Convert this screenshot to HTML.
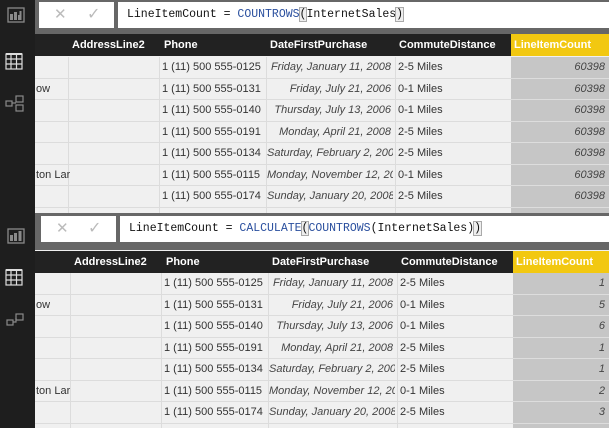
<!DOCTYPE html><html><head><style>
*{margin:0;padding:0;box-sizing:border-box}
body{width:609px;height:428px;overflow:hidden;background:#1e1e1e;position:relative;font-family:"Liberation Sans",sans-serif;font-size:11px;color:#333}
.p{position:absolute;left:35px;width:574px;overflow:hidden}
.fb{position:absolute;left:0;top:0;width:100%;background:#676767}
.bx{position:absolute;background:#fff}
.f{font-family:"Liberation Mono",monospace;font-size:11.5px;color:#111;position:absolute;white-space:nowrap}
.f b{font-weight:normal;color:#2a4f9e}
.f i{font-style:normal;outline:1px solid #aaa;background:#eee}
.hd{position:absolute;left:0;width:100%;height:22px;background:#222;color:#fff;font-weight:bold}
.hd span{position:absolute;top:5px}
.y{position:absolute;top:0;height:22px;background:#f2c811;right:0}
.r{position:absolute;left:0;width:100%;height:21.5px;background:#f0f0f0;border-bottom:1px solid #dcdcdc}
.r span{position:absolute;top:4px;white-space:nowrap;overflow:hidden}
.r .c{position:absolute;top:0;bottom:0;border-left:1px solid #dcdcdc}
.r .g{position:absolute;top:0;bottom:-1px;right:0;background:#c6c6c6;border-bottom:1px solid #ddd}
.it{font-style:italic;color:#444;text-align:right}
.ic{position:absolute;left:0;width:35px}
</style></head><body>
<!-- sidebar icons -->
<svg class="ic" style="top:0;height:428px" width="35" height="428">
<g fill="none" stroke="#8a8a8a" stroke-width="1.3">
<rect x="8" y="28" width="16" height="14" transform="translate(0,-20)"/>
<rect x="8" y="229" width="16" height="14"/>
</g>
<g fill="#8a8a8a"><rect x="10" y="14" width="3" height="6"/><rect x="14" y="12" width="3" height="8"/><rect x="18" y="15" width="3" height="5"/><rect x="19.5" y="11" width="2" height="9"/>
<rect x="10" y="235" width="3" height="6"/><rect x="14" y="233" width="3" height="8"/><rect x="18.5" y="231" width="3" height="10"/></g>
<g fill="none" stroke="#ddd" stroke-width="1.2">
<rect x="6" y="54" width="16" height="15"/><path d="M6 59h16M6 64h16M11 54v15M16.5 54v15"/>
<rect x="6" y="270" width="16" height="15"/><path d="M6 275h16M6 280h16M11 270v15M16.5 270v15"/>
</g>
<rect x="6" y="53" width="16" height="2" fill="#ddd"/><rect x="6" y="269" width="16" height="2" fill="#ddd"/>
<g fill="none" stroke="#8a8a8a" stroke-width="1.2">
<rect x="6" y="101" width="6" height="5"/><rect x="16" y="96" width="7" height="6"/><rect x="16" y="105" width="7" height="6"/><path d="M12 103h4"/>
<rect x="7" y="320" width="6" height="5"/><rect x="16" y="314" width="7" height="6"/><path d="M13 322h3v-4"/>
</g>
</svg>

<!-- panel 1 -->
<div class="p" style="top:0;height:213px;background:#f0f0f0">
<div class="fb" style="height:34px"></div>
<div class="bx" style="left:4px;top:2px;width:75px;height:26px"><span style="position:absolute;left:15px;top:3px;color:#bbb;font-size:15px">✕</span><span style="position:absolute;left:48px;top:2px;color:#bbb;font-size:16px">✓</span></div>
<div class="bx" style="left:83px;top:2px;width:491px;height:26px"><div class="f" style="left:9px;top:6px">LineItemCount = <b>COUNTROWS</b><i>(</i>InternetSales<i>)</i></div></div>
<div class="hd" style="top:34px"><span style="left:37px">AddressLine2</span><span style="left:129px">Phone</span><span style="left:235px">DateFirstPurchase</span><span style="left:364px">CommuteDistance</span><div class="y" style="width:98px"><span style="left:3px;color:#fff">LineItemCount</span></div></div>
</div>
<!-- panel 2 -->
<div class="p" style="top:213px;height:215px;background:#f0f0f0">
<div class="fb" style="height:37px"></div>
<div class="bx" style="left:6px;top:3px;width:75px;height:26px"><span style="position:absolute;left:15px;top:3px;color:#bbb;font-size:15px">✕</span><span style="position:absolute;left:47px;top:2px;color:#bbb;font-size:16px">✓</span></div>
<div class="bx" style="left:85px;top:3px;width:489px;height:26px"><div class="f" style="left:9px;top:6px">LineItemCount = <b>CALCULATE</b><i>(</i><b>COUNTROWS</b>(InternetSales)<i>)</i></div></div>
<div class="hd" style="top:38px"><span style="left:39px">AddressLine2</span><span style="left:131px">Phone</span><span style="left:237px">DateFirstPurchase</span><span style="left:366px">CommuteDistance</span><div class="y" style="width:96px"><span style="left:3px;color:#fff">LineItemCount</span></div></div>
</div>
<div id="rows"></div>
<script>
var ph=["0125","0131","0140","0191","0134","0115","0174","0120"];
var dt=["Friday, January 11, 2008","Friday, July 21, 2006","Thursday, July 13, 2006","Monday, April 21, 2008","Saturday, February 2, 2008","Monday, November 12, 2007","Sunday, January 20, 2008","Tuesday, October 9, 2007"];
var cm=["2-5 Miles","0-1 Miles","0-1 Miles","2-5 Miles","2-5 Miles","0-1 Miles","2-5 Miles","1-2 Miles"];
var a1=["","ow","","","","ton Lar","",""];
var v2=["1","5","6","1","1","2","3","2"];
function mk(p,top,n,dx,vals){
 var P=document.querySelectorAll('.p')[p];
 for(var i=0;i<n;i++){
  var d=document.createElement('div');d.className='r';d.style.top=(top+i*21.5)+'px';
  d.innerHTML='<div class="c" style="left:'+(33+dx)+'px"></div><div class="c" style="left:'+(124+dx)+'px"></div><div class="c" style="left:'+(231+dx)+'px"></div><div class="c" style="left:'+(360+dx)+'px"></div>'+
  '<span style="left:1px">'+a1[i]+'</span><span style="left:'+(127+dx)+'px">1 (11) 500 555-'+ph[i]+'</span>'+
  '<span class="it" style="left:'+(232+dx)+'px;width:126px;text-align:right;padding-right:2px">'+dt[i]+'</span>'+
  '<span style="left:'+(363+dx)+'px">'+cm[i]+'</span>'+
  '<div class="g" style="width:'+(98-dx)+'px"><span class="it" style="right:4px">'+vals[i]+'</span></div>';
  P.appendChild(d);
 }
}
mk(0,57,8,0,["60398","60398","60398","60398","60398","60398","60398","60398"]);
mk(1,60,8,2,v2);
</script>
</body></html>
